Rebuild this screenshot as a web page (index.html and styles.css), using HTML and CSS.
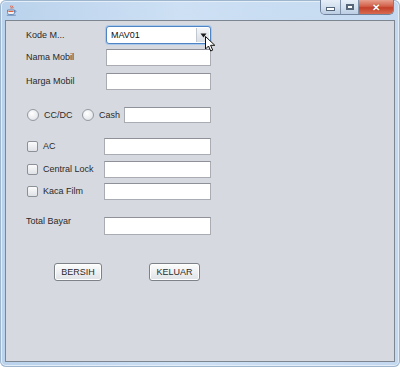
FILE: index.html
```html
<!DOCTYPE html>
<html lang="id">
<head>
  <meta charset="UTF-8">
  <title>Rental Mobil</title>
  <link rel="stylesheet" href="styles.css">
</head>
<body>
  <div class="window">
    <div class="titlebar">
      <svg class="app-icon" width="11" height="11" viewBox="0 0 11 11">
        <path d="M5 0.5c-1 1.2 1 1.8 0 3.2M6.8 0.8c-0.8 1 0.8 1.6 0 2.6" stroke="#e0502a" stroke-width="1" fill="none"/>
        <path d="M1.5 5h7v2.6c0 1.3-1 2-2.2 2h-2.6c-1.2 0-2.2-0.7-2.2-2z" fill="#f1f1f1" stroke="#5d7fb0" stroke-width="0.9"/>
        <path d="M8.5 5.6h0.8c0.9 0 0.9 1.6 0 1.6h-0.8" fill="none" stroke="#5d7fb0" stroke-width="0.8"/>
        <path d="M2.4 6.4h5.2" stroke="#e0502a" stroke-width="1"/>
        <path d="M0.8 10.2h9" stroke="#5d7fb0" stroke-width="0.8"/>
      </svg>
      <div class="caption-buttons">
        <span class="cap-btn cap-min"><i></i></span>
        <span class="cap-btn cap-max"><i></i></span>
        <span class="cap-btn cap-close">&#x2715;</span>
      </div>
    </div>

    <div class="panel">
      <div class="row row-kode">
        <span class="label">Kode M...</span>
        <div class="combo">
          <span class="combo-text">MAV01</span>
          <span class="combo-arrow">
            <svg width="7" height="7" viewBox="0 0 7 7"><path d="M0.5 1.5h6l-3 4z" fill="#1d1d1d"/></svg>
          </span>
          <svg class="cursor" width="11" height="16" viewBox="0 0 11 16">
            <path d="M0.5 0.5v12.5l3-3 2.2 5 2-0.9-2.1-4.8h4.2z" fill="#fff" stroke="#111" stroke-width="1" stroke-linejoin="round"/>
          </svg>
        </div>
      </div>

      <div class="row row-nama">
        <span class="label">Nama Mobil</span>
        <div class="field"></div>
      </div>

      <div class="row row-harga">
        <span class="label">Harga Mobil</span>
        <div class="field"></div>
      </div>

      <div class="row row-bayar">
        <label class="option opt-cc"><span class="radio"></span>CC/DC</label>
        <label class="option opt-cash"><span class="radio"></span>Cash</label>
        <div class="field field-short"></div>
      </div>

      <div class="row row-ac">
        <label class="option opt-check"><span class="check"></span>AC</label>
        <div class="field field-wide"></div>
      </div>

      <div class="row row-lock">
        <label class="option opt-check"><span class="check"></span>Central Lock</label>
        <div class="field field-wide"></div>
      </div>

      <div class="row row-film">
        <label class="option opt-check"><span class="check"></span>Kaca Film</label>
        <div class="field field-wide"></div>
      </div>

      <div class="row row-total">
        <span class="label label-top">Total Bayar</span>
        <div class="field field-wide"></div>
      </div>

      <div class="row row-buttons">
        <button class="btn btn-bersih">BERSIH</button>
        <button class="btn btn-keluar">KELUAR</button>
      </div>
    </div>
  </div>
</body>
</html>
```

FILE: styles.css
```css
body {
  margin: 0;
  font-family: "Liberation Sans", Arial, sans-serif;
  font-size: 9px;
  color: #2a2a2a;
  background: #fff;
}

.window {
  width: 400px;
  height: 367px;
  box-sizing: border-box;
  padding: 0 5px 5px;
  display: flex;
  flex-direction: column;
  border-radius: 6px;
  background: linear-gradient(to right, #bad2ec, #cde0f4 45%, #c4d9f0);
  box-shadow: inset 0 0 0 1px #9fb6cf, inset 0 0 0 2px #e4eef9;
}

/* barre de titre */
.titlebar {
  height: 20px;
  display: flex;
  align-items: flex-start;
  flex-shrink: 0;
}

.app-icon {
  margin: 5px 0 0 1px;
}

.caption-buttons {
  margin-left: auto;
  margin-right: 1px;
  display: flex;
  height: 14px;
  border: 1px solid #6f819b;
  border-top: none;
  border-radius: 0 0 5px 5px;
  overflow: hidden;
}

.cap-btn {
  height: 14px;
  display: flex;
  justify-content: center;
  align-items: center;
  box-sizing: border-box;
}

.cap-min, .cap-max {
  background: linear-gradient(to bottom, #e6eef8, #d3e0ef 50%, #bccde3);
  border-right: 1px solid #7f91a8;
}

.cap-min {
  width: 20px;
}

.cap-max {
  width: 18px;
}

.cap-min i {
  width: 7px;
  height: 2px;
  margin-top: 4px;
  background: #fff;
  border: 1px solid #55657a;
}

.cap-max i {
  width: 6px;
  height: 4px;
  background: #fff;
  border: 1px solid #55657a;
  box-shadow: inset 0 0 0 1px #55657a;
}

.cap-close {
  width: 34px;
  color: #fff;
  font-size: 10px;
  font-weight: bold;
  background: linear-gradient(to bottom, #e8a08f, #d2604a 45%, #c4402a 55%, #d76a50);
  text-shadow: 0 0 1px #7a2414;
}

/* panneau principal */
.panel {
  flex: 1;
  border: 1px solid #7c8590;
  background: #d6d9df;
  display: flex;
  flex-direction: column;
  padding-left: 20px;
}

.row {
  display: flex;
  align-items: center;
  height: 17px;
  flex-shrink: 0;
}

.row-kode   { margin-top: 5px; height: 18px; }
.row-nama   { margin-top: 5px; }
.row-harga  { margin-top: 7px; }
.row-bayar  { margin-top: 17px; height: 16px; }
.row-ac     { margin-top: 15px; }
.row-lock   { margin-top: 6px; }
.row-film   { margin-top: 5px; }
.row-total  { margin-top: 17px; height: 18px; align-items: flex-start; }
.row-buttons { margin-top: 28px; height: 18px; padding-left: 28px; gap: 47px; }

.label {
  width: 80px;
  line-height: 11px;
}

.label-top {
  width: 78px;
  margin-top: -1px;
}

.field {
  width: 105px;
  height: 100%;
  box-sizing: border-box;
  background: #fff;
  border: 1px solid #a9adb3;
  border-top-color: #8e9298;
}

.field-wide {
  width: 107px;
}

.field-short {
  width: 87px;
}

/* combo */
.combo {
  position: relative;
  width: 105px;
  height: 18px;
  box-sizing: border-box;
  display: flex;
  align-items: center;
  background: #fff;
  border: 1px solid #4f84c4;
  border-radius: 3px;
  box-shadow: 0 0 0 1px #a9c8ea;
}

.combo-text {
  flex: 1;
  padding-left: 4px;
  color: #111;
}

.combo-arrow {
  width: 12px;
  height: 14px;
  margin-right: 1px;
  display: flex;
  justify-content: center;
  align-items: center;
  background: linear-gradient(to bottom, #f4f6f9, #d9dee5);
  border-left: 1px solid #c2c8d0;
}

.cursor {
  position: absolute;
  left: 98px;
  top: 9px;
}

/* radios et cases */
.option {
  display: flex;
  align-items: center;
  gap: 5px;
  line-height: 11px;
}

.opt-cc {
  width: 55px;
  margin-left: 1px;
}

.opt-cash {
  width: 42px;
}

.opt-check {
  width: 77px;
  margin-left: 1px;
}

.radio {
  width: 10px;
  height: 10px;
  border-radius: 50%;
  border: 1px solid #959aa1;
  background: radial-gradient(circle at 40% 35%, #fff, #e9ebee 60%, #d5d8dd);
  flex-shrink: 0;
}

.check {
  width: 9px;
  height: 9px;
  border-radius: 2px;
  border: 1px solid #8c9198;
  background: linear-gradient(to bottom, #fbfbfc, #dfe2e6);
  flex-shrink: 0;
}

/* boutons */
.btn {
  height: 18px;
  padding: 0;
  font-family: inherit;
  font-size: 9px;
  color: #2a2a2a;
  border: 1px solid #7d8289;
  border-radius: 3px;
  background: linear-gradient(to bottom, #fdfdfd, #eef0f2 50%, #dfe2e6);
  box-shadow: inset 0 0 0 1px #fff;
}

.btn-bersih {
  width: 48px;
}

.btn-keluar {
  width: 51px;
}
```
